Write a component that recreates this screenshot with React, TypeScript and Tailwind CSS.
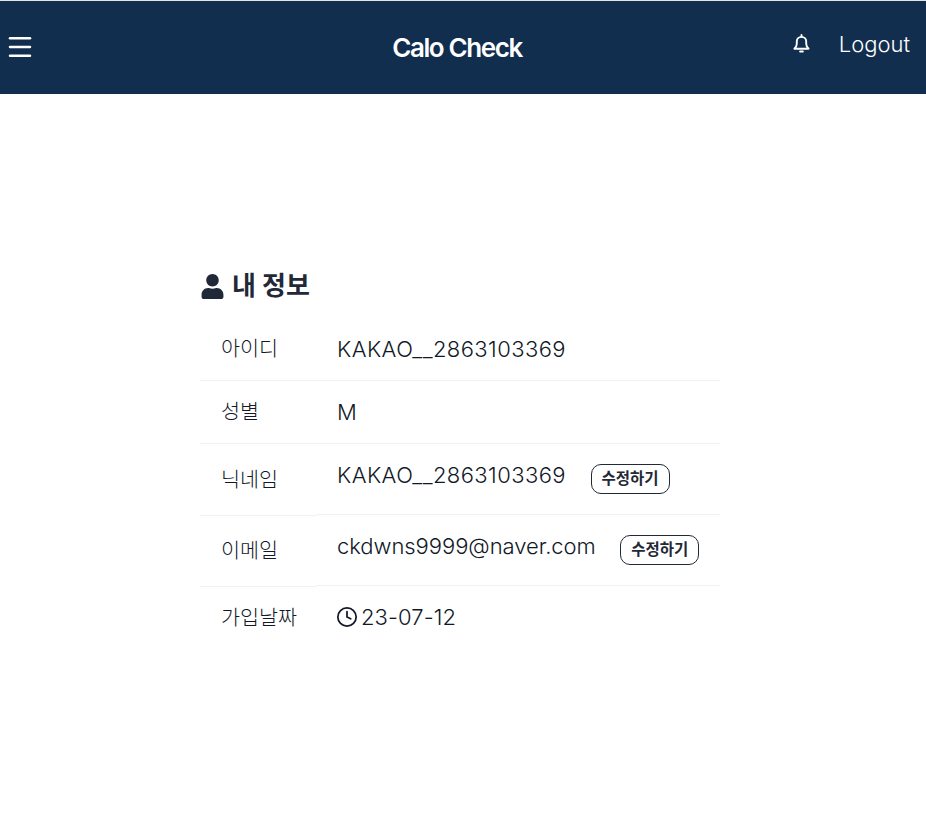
import { Clock, Menu } from "lucide-react";
import { FaUser } from "react-icons/fa";

const font = "font-['Inter','Noto_Sans_CJK_KR',sans-serif]";

function Edit() {
  return (
    <button className="ml-[24.5px] inline-flex h-[30px] w-[79px] items-center justify-center rounded-[10px] border border-[#1f2937] bg-white text-[15.5px] font-semibold text-[#1f2937]">
      수정하기
    </button>
  );
}

const left = [
  { t: "아이디", h: "h-[64px]" },
  { t: "성별", h: "h-[63px]" },
  { t: "닉네임", h: "h-[72px]" },
  { t: "이메일", h: "h-[71px]" },
  { t: "가입날짜", h: "h-[62px]", last: true },
];

export default function App() {
  return (
    <div className={`${font} min-h-[821px] bg-white text-[#1f2937]`}>
      <div className="h-px bg-[#e5e5e5]" />
      <header className="grid h-[93px] grid-cols-[1fr_auto_1fr] items-center bg-[#122e4f] pl-[5px] pr-[16px] text-white">
        <Menu size={30} strokeWidth={2} className="-mt-[1px]" />
        <h1 className="mr-[1px] text-[26px] font-semibold tracking-[-1.4px]">Calo Check</h1>
        <div className="-mt-[6px] flex items-center justify-end gap-[29px]">
          <svg width="17" height="19" viewBox="0 0 18 20" fill="none" stroke="currentColor" strokeWidth="2" strokeLinejoin="round" className="-mt-[2px]">
            <path d="M1.5 15.5c1.5-1.5 2.5-2.5 2.5-5V8a5 5 0 0 1 10 0v2.5c0 2.5 1 3.5 2.5 5Z" />
            <path d="M9 1v2M7.5 18.5h3" strokeLinecap="round" />
          </svg>
          <span className="text-[22px] font-light">Logout</span>
        </div>
      </header>
      <main className="ml-[200px] w-[520px] pt-[174px]">
        <h2 className="mb-[13px] flex h-[36px] items-center gap-[7px] text-[26px] font-bold">
          <FaUser size={25} />
          <span className="-mt-[2px]">내 정보</span>
        </h2>
        <div className="flex">
          <div className="w-[117px] text-[20.7px] font-light text-[#111827]">
            {left.map((r) => (
              <div
                key={r.t}
                className={`flex items-center pl-[21px] ${r.h} ${r.last ? "" : "border-b border-[#f1f1f1]"}`}
              >
                <span className={r.t === "아이디" ? "mt-[1px]" : ""}>{r.t}</span>
              </div>
            ))}
          </div>
          <div className="flex-1 text-[22px] font-light text-[#111827]">
            <div className="flex h-[64px] items-center border-b border-[#f1f1f1] pl-[20px]">
              <span className="mt-[1px] tracking-[0.42px]">KAKAO__2863103369</span>
            </div>
            <div className="flex h-[63px] items-center border-b border-[#f1f1f1] pl-[20px]">M</div>
            <div className="flex h-[71px] items-center border-b border-[#f1f1f1] pl-[20px]">
              <span className="-mt-[8px] tracking-[0.42px]">KAKAO__2863103369</span>
              <Edit />
            </div>
            <div className="flex h-[71px] items-center border-b border-[#f1f1f1] pl-[20px]">
              <span className="-mt-[8px] tracking-[-0.05px]">ckdwns9999@naver.com</span>
              <Edit />
            </div>
            <div className="flex h-[62px] items-center gap-[3px] pl-[19px]">
              <Clock size={22} strokeWidth={1.9} />
              <span className="tracking-[0.1px]">23-07-12</span>
            </div>
          </div>
        </div>
      </main>
    </div>
  );
}
